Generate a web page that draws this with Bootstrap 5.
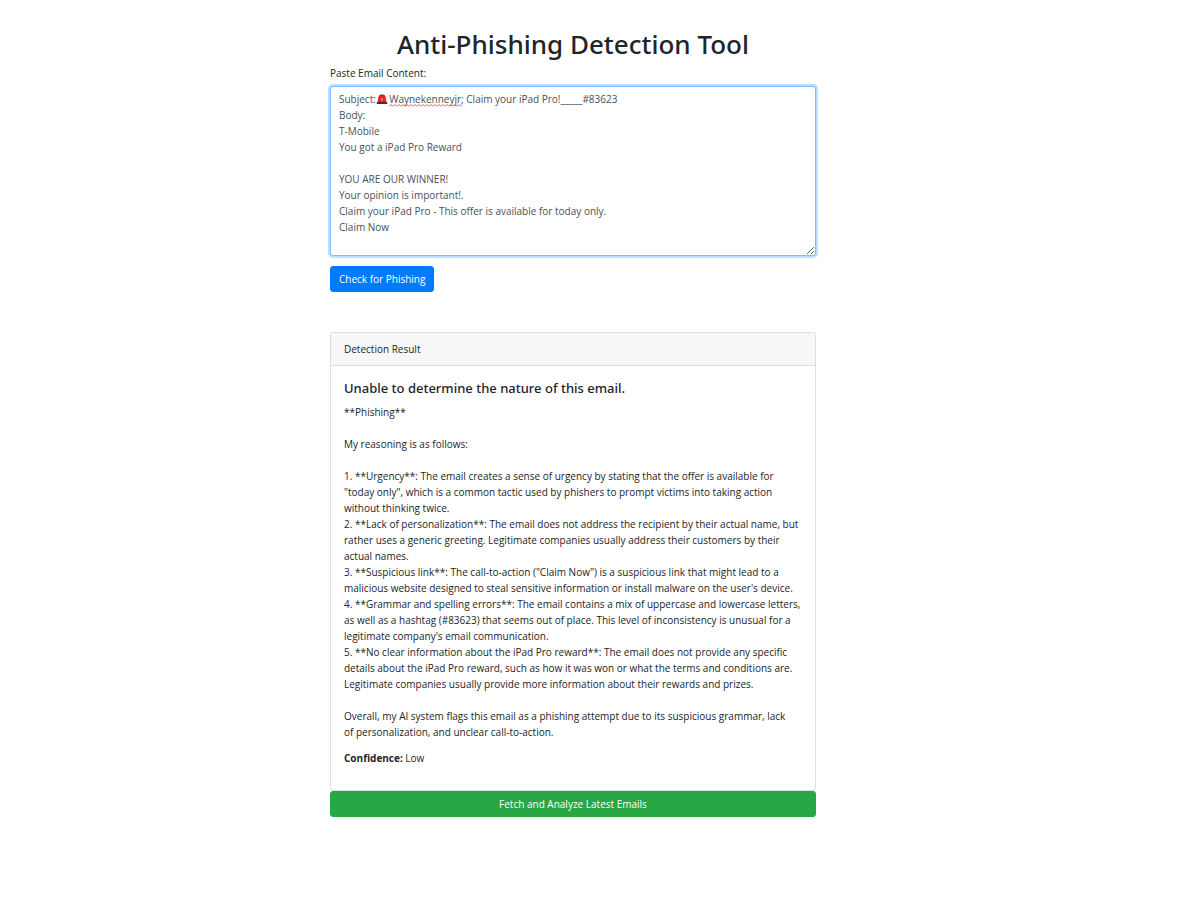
<!DOCTYPE html>
<html lang="en">
<head>
<meta charset="utf-8">
<meta name="viewport" content="width=device-width, initial-scale=1">
<title>Anti-Phishing Detection Tool</title>
<link href="https://cdn.jsdelivr.net/npm/bootstrap@5.3.0/dist/css/bootstrap.min.css" rel="stylesheet">
<style>
  body { font: 400 10px/16px "Open Sans", "Noto Sans", sans-serif; color: #212529; padding-right: 53px; }
  .tool { max-width: 506px; padding: 28px 10px; }
  .tool h1, .tool h2 { font-family: "Noto Sans", "Open Sans", sans-serif; font-weight: 500; }
  .tool h1 { font-size: 26px; line-height: 32px; margin-bottom: 5px; }
  .tool .form-label { margin-bottom: 5px; }
  .tool .form-control { font-size: 10px; line-height: 16px; padding: 4px 8px; border-radius: 3px; color: #495057; resize: vertical; }
  .tool .form-control:focus { border-color: #80bdff; box-shadow: 0 0 0 2px #bfdeff; }
  .tool .btn { font-size: 10px; line-height: 16px; padding: 4px 8px; border-radius: 3px; }
  .btn-check-mail { --bs-btn-bg: #007bff; --bs-btn-border-color: #007bff; margin-top: 10px; }
  .btn-fetch { --bs-btn-bg: #28a745; --bs-btn-border-color: #28a745; }
  .siren { left: 46px; top: 8px; }
  .squiggle { left: 59px; top: 18px; width: 73px; height: 3px; }
  .result { margin-top: 40px; border-radius: 3px; border-color: #dfdfdf; color: #212529; }
  .result .card-header { padding: 8px 13px; background: #f7f7f7; border-color: #dfdfdf; }
  .result .card-body { padding: 13px; }
  .result h2 { font-size: 13px; line-height: 18px; margin-bottom: 7px; }
  .result p { margin-bottom: 10px; }
  .result p:last-child { margin-bottom: 11px; }
  .reasoning { white-space: pre-line; }
</style>
</head>
<body>
<main class="container tool">
  <h1 class="text-center">Anti-Phishing Detection Tool</h1>
  <form>
    <label class="form-label d-block" for="email">Paste Email Content:</label>
    <div class="position-relative">
      <textarea class="form-control d-block" id="email" rows="10" spellcheck="false" autofocus>Subject:&emsp;&thinsp;&thinsp;Waynekenneyjr; Claim your iPad Pro!_____#83623
Body:
T-Mobile
You got a iPad Pro Reward

YOU ARE OUR WINNER!
Your opinion is important!.
Claim your iPad Pro - This offer is available for today only.
Claim Now
</textarea>
      <svg class="siren position-absolute pe-none" width="12" height="11" viewBox="0 0 12 11" aria-hidden="true">
        <path d="M1.500 8L2.500 2.500Q2.800 1 4.500 1h3Q9.200 1 9.500 2.500L10.500 8z" fill="#e8202a"/>
        <path d="M3 2Q3.500 .5 5 .5h2Q8.500 .5 9 2z" fill="#7b3b40"/>
        <path d="M5 4h2v3H5z" fill="#ff6b62"/>
        <path d="M1.200 8h9.600l.7 2H.5z" fill="#3c3539"/>
      </svg>
      <svg class="squiggle position-absolute pe-none" aria-hidden="true">
        <defs><pattern id="wave" width="4" height="3" patternUnits="userSpaceOnUse"><path d="M0 2.500L2 .5L4 2.500" fill="none" stroke="#f25555"/></pattern></defs>
        <rect width="100%" height="3" fill="url(#wave)"/>
      </svg>
    </div>
    <button type="button" class="btn btn-primary btn-check-mail">Check for Phishing</button>
  </form>
  <section class="card result">
    <div class="card-header">Detection Result</div>
    <div class="card-body">
      <h2>Unable to determine the nature of this email.</h2>
      <p class="reasoning">**Phishing**

My reasoning is as follows:

1. **Urgency**: The email creates a sense of urgency by stating that the offer is available for "today only", which is a common tactic used by phishers to prompt victims into taking action without thinking twice.
2. **Lack of personalization**: The email does not address the recipient by their actual name, but rather uses a generic greeting. Legitimate companies usually address their customers by their actual names.
3. **Suspicious link**: The call-to-action ("Claim Now") is a suspicious link that might lead to a malicious website designed to steal sensitive information or install malware on the user's device.
4. **Grammar and spelling errors**: The email contains a mix of uppercase and lowercase letters, as well as a hashtag (#83623) that seems out of place. This level of inconsistency is unusual for a legitimate company's email communication.
5. **No clear information about the iPad Pro reward**: The email does not provide any specific details about the iPad Pro reward, such as how it was won or what the terms and conditions are. Legitimate companies usually provide more information about their rewards and prizes.

Overall, my AI system flags this email as a phishing attempt due to its suspicious grammar, lack of&nbsp;personalization, and unclear call-to-action.</p>
      <p><strong>Confidence:</strong> Low</p>
    </div>
  </section>
  <button type="button" class="btn btn-success btn-fetch w-100 d-block">Fetch and Analyze Latest Emails</button>
</main>
<script src="https://cdn.jsdelivr.net/npm/bootstrap@5.3.0/dist/js/bootstrap.bundle.min.js"></script>
</body>
</html>
